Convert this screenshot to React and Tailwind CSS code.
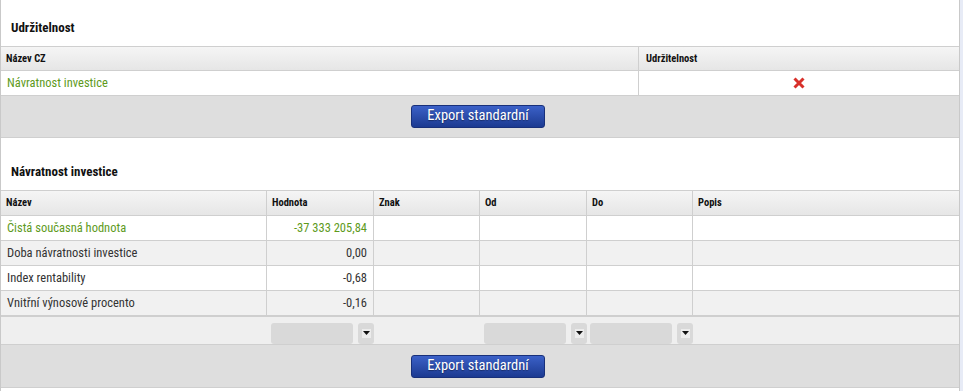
import React from 'react';

const font = "font-['Roboto_Condensed','Liberation_Sans_Narrow',Roboto,sans-serif] font-stretch-condensed";

const cols2 = 'grid grid-cols-[266px_107px_106px_107px_106px_266px]';

const rows = [
  { name: 'Čistá současná hodnota', value: '-37 333 205,84', highlight: true },
  { name: 'Doba návratnosti investice', value: '0,00' },
  { name: 'Index rentability', value: '-0,68' },
  { name: 'Vnitřní výnosové procento', value: '-0,16' },
];

const XIcon = () => (
  <svg width="12" height="12" viewBox="0 0 12 12">
    <path d="M1.5 1.5 L10.5 10.5 M10.5 1.5 L1.5 10.5" stroke="#d8302a" strokeWidth="3" />
  </svg>
);

const Select = () => (
  <div className="flex items-center justify-end gap-[5px]">
    <div className="h-[21px] w-[82px] rounded-[3px] bg-[#d9d9d9]" />
    <div className="flex h-[21px] w-[16px] items-center justify-center rounded-[3px] bg-[#d9d9d9]">
      <span className="flex h-[9px] w-[9px] items-center justify-center bg-[#ececec]">
        <svg width="7" height="4" viewBox="0 0 7 4">
          <path d="M0 0h7L3.5 4z" fill="#111" />
        </svg>
      </span>
    </div>
  </div>
);

const ExportButton = () => (
  <button className="h-[23px] w-[134px] rounded-[3px] border border-[#18307a] bg-linear-to-b from-[#3b61c8] to-[#1c3a91] text-[14.5px] leading-none text-white [text-shadow:0_1px_1px_rgba(0,0,0,0.35)]">
    Export standardní
  </button>
);

const Footer = ({ h }) => (
  <div className={`flex ${h} items-center justify-center border-b border-[#cfcfcf] bg-[#dedede] pr-[4px]`}>
    <ExportButton />
  </div>
);

const Title = ({ children, h }) => (
  <div className={`flex ${h} items-end px-[10px] pb-[10px] text-[13px] leading-4 font-bold text-[#111]`}>
    {children}
  </div>
);

const headCell = 'flex items-center px-[5px] text-[10.5px] font-bold text-[#111]';

export default function App() {
  return (
    <div className={`flex h-[391px] w-[963px] overflow-hidden bg-white ${font}`}>
      <div className="w-[960px] border-x border-[#c9c9c9]">
        <Title h="h-[46px]">Udržitelnost</Title>

        <div className="grid h-[25px] grid-cols-[638px_1fr] border-y border-[#cfcfcf] bg-linear-to-b from-[#f5f5f5] to-[#e6e6e6]">
          <div className={`${headCell} border-r border-[#cfcfcf]`}>Název CZ</div>
          <div className={`${headCell} pl-[7px]`}>Udržitelnost</div>
        </div>
        <div className="grid h-[25px] grid-cols-[638px_1fr] border-b border-[#cfcfcf]">
          <div className="flex items-center border-r border-[#cfcfcf] px-[6px] text-[12.5px] text-[#5e9a1c]">
            Návratnost investice
          </div>
          <div className="flex items-center justify-center">
            <XIcon />
          </div>
        </div>
        <Footer h="h-[42px]" />

        <Title h="h-[52px]">Návratnost investice</Title>

        <div className={`${cols2} h-[26px] border-y border-[#cfcfcf] bg-linear-to-b from-[#f5f5f5] to-[#e6e6e6]`}>
          {['Název', 'Hodnota', 'Znak', 'Od', 'Do', 'Popis'].map((c, i) => (
            <div key={c} className={`${headCell} ${i < 5 ? 'border-r border-[#cfcfcf]' : ''}`}>
              {c}
            </div>
          ))}
        </div>
        {rows.map((r, idx) => (
          <div
            key={r.name}
            className={`${cols2} h-[25px] border-b border-[#cfcfcf] text-[12.5px] ${idx % 2 ? 'bg-[#f1f1f1]' : 'bg-white'}`}
          >
            <div className={`flex items-center border-r border-[#cfcfcf] px-[6px] ${r.highlight ? 'text-[#5e9a1c]' : 'text-[#333]'}`}>
              {r.name}
            </div>
            <div className={`flex items-center justify-end border-r border-[#cfcfcf] pr-[6px] ${r.highlight ? 'text-[#5e9a1c]' : 'text-[#333]'}`}>
              {r.value}
            </div>
            <div className="border-r border-[#cfcfcf]" />
            <div className="border-r border-[#cfcfcf]" />
            <div className="border-r border-[#cfcfcf]" />
            <div />
          </div>
        ))}
        <div className={`${cols2} h-[29px] border-y border-[#cfcfcf] bg-[#efefef] pt-[5px]`}>
          <div />
          <Select />
          <div />
          <Select />
          <Select />
          <div />
        </div>
        <Footer h="h-[43px]" />
      </div>
      <div className="flex-1 bg-[#e7ebf6]" />
    </div>
  );
}
